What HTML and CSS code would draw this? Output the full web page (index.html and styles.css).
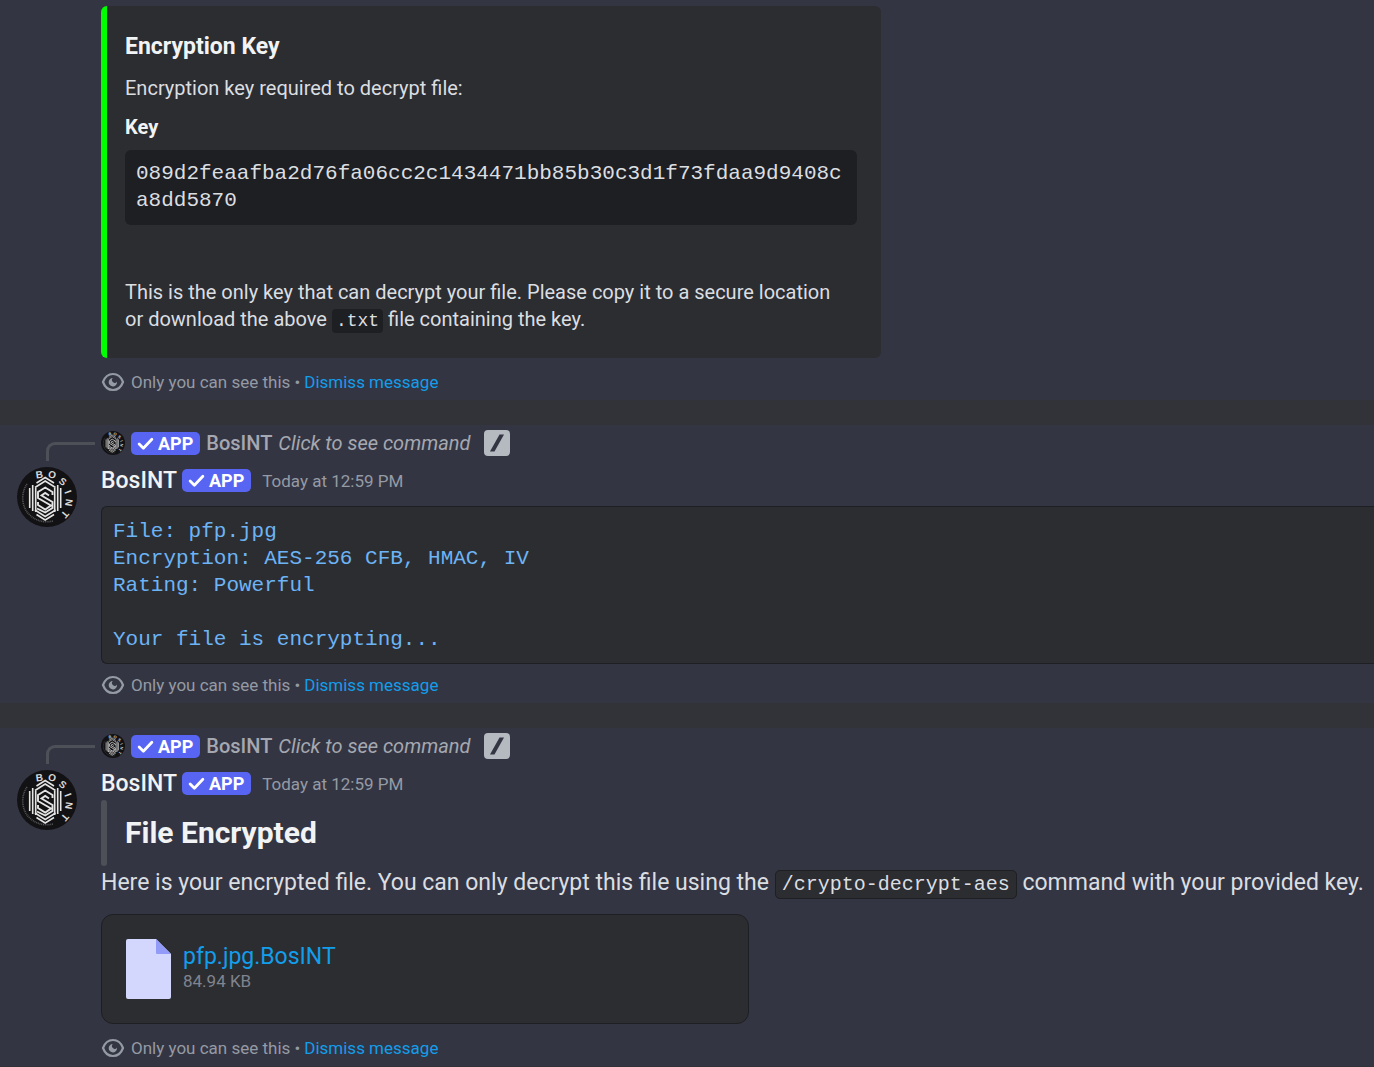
FILE: index.html
```html
<!DOCTYPE html>
<html lang="en">
<head>
<meta charset="utf-8">
<meta name="viewport" content="width=device-width, initial-scale=1">
<title>BosINT</title>
<link rel="stylesheet" href="styles.css">
</head>
<body>
<svg class="sprite" aria-hidden="true">
  <symbol id="logo" viewBox="0 0 60 60">
    <circle cx="30" cy="30" r="30" fill="#121214"/>
    <g fill="#d8d8d8" font-family="Liberation Sans, Arial, sans-serif" font-weight="700" font-size="10" text-anchor="middle">
      <text transform="translate(22.5 8) rotate(-8)" y="3">B</text>
      <text transform="translate(35 8) rotate(14)" y="3">O</text>
      <text transform="translate(45.500 15) rotate(38)" y="3">S</text>
      <text transform="translate(50.500 25) rotate(70)" y="3">I</text>
      <text transform="translate(51.500 35.500) rotate(98)" y="3">N</text>
      <text transform="translate(47.500 47) rotate(130)" y="3">T</text>
    </g>
    <path d="M10 17A25 25 0 0 0 10 45A25 25 0 0 0 36 54" fill="none" stroke="#58585b" stroke-width="1.600" stroke-dasharray="1 .8"/>
    <g fill="none" stroke="#e4e4e4" stroke-width="1.600">
      <path d="M12.700 21v20M15.700 18v26M18.700 21v24M37.700 21v24M40.700 18v26M43.700 21v20"/>
      <path d="M19.500 16l8.700-5.500 8.800 5.500M18 20.500l10.200-6.500 10.300 6.500"/>
      <path d="M19.500 47.500l8.700 5.500 8.800-5.500M18 43l10.200 6.500L38.500 43"/>
      <path d="M35.500 28v-3l-7.300-4.500L21 25v6l13 7.500-5.800 4L21 38v-3M32 28.500l-3.800-2.500-3.700 2.500 11 6.500v6l-7.300 4.500L20 41.500" stroke-width="1.900"/>
    </g>
  </symbol>
  <symbol id="check" viewBox="0 0 16 14">
    <path d="M2 7.500l4 4L14 3" fill="none" stroke="currentColor" stroke-width="2.600" stroke-linecap="round" stroke-linejoin="round"/>
  </symbol>
  <symbol id="eye" viewBox="0 0 24 20">
    <path d="M2 10C4 4.500 8 2 12 2s8 2.500 10 8c-2 5.500-6 8-10 8S4 15.500 2 10z" fill="none" stroke="currentColor" stroke-width="2.200" stroke-linejoin="round"/>
    <path d="M12 6a2.300 2.300 0 0 0 0 4 2.300 2.300 0 0 0 4-.5A4.200 4.200 0 1 1 12 6z" fill="currentColor"/>
  </symbol>
  <symbol id="slash" viewBox="0 0 26 26">
    <rect width="26" height="26" rx="4" fill="#b5bac1"/>
    <path d="M15.500 4.500H20L10.500 21.500H6z" fill="#343543"/>
  </symbol>
</svg>

<main class="chat">
  <article class="message">
    <div class="embed">
      <h2 class="embed-title">Encryption Key</h2>
      <p class="embed-text">Encryption key required to decrypt file:</p>
      <h3 class="field-name">Key</h3>
      <pre class="key">089d2feaafba2d76fa06cc2c1434471bb85b30c3d1f73fdaa9d9408ca8dd5870</pre>
      <p class="embed-note">This is the only key that can decrypt your file. Please copy it to a secure location<br>or download the above <code class="file-code">.txt</code> file containing the key.</p>
    </div>
    <footer class="notice"><svg class="eye"><use href="#eye"/></svg><span>Only you can see this •</span><a href="#">Dismiss message</a></footer>
  </article>

  <article class="message">
    <div class="reply">
      <span class="spine"></span>
      <svg class="mini-avatar"><use href="#logo"/></svg>
      <span class="badge"><svg class="check"><use href="#check"/></svg>APP</span>
      <span class="reply-name">BosINT</span>
      <em class="reply-text">Click to see command</em>
      <svg class="slash"><use href="#slash"/></svg>
    </div>
    <header class="header">
      <svg class="avatar"><use href="#logo"/></svg>
      <h2 class="name">BosINT</h2>
      <span class="badge"><svg class="check"><use href="#check"/></svg>APP</span>
      <time class="time">Today at 12:59 PM</time>
    </header>
    <pre class="output">File: pfp.jpg
Encryption: AES-256 CFB, HMAC, IV
Rating: Powerful

Your file is encrypting...</pre>
    <footer class="notice after-code"><svg class="eye"><use href="#eye"/></svg><span>Only you can see this •</span><a href="#">Dismiss message</a></footer>
  </article>

  <article class="message">
    <div class="reply">
      <span class="spine"></span>
      <svg class="mini-avatar"><use href="#logo"/></svg>
      <span class="badge"><svg class="check"><use href="#check"/></svg>APP</span>
      <span class="reply-name">BosINT</span>
      <em class="reply-text">Click to see command</em>
      <svg class="slash"><use href="#slash"/></svg>
    </div>
    <header class="header">
      <svg class="avatar"><use href="#logo"/></svg>
      <h2 class="name">BosINT</h2>
      <span class="badge"><svg class="check"><use href="#check"/></svg>APP</span>
      <time class="time">Today at 12:59 PM</time>
    </header>
    <blockquote class="quote"><h1 class="quote-title">File Encrypted</h1></blockquote>
    <p class="body-text">Here is your encrypted file. You can only decrypt this file using the <code class="command">/crypto-decrypt-aes</code> command with your provided key.</p>
    <div class="attachment">
      <svg class="file-icon" viewBox="0 0 45 60"><path d="M2 0H30L45 15V58a2 2 0 0 1-2 2H2a2 2 0 0 1-2-2V2a2 2 0 0 1 2-2z" fill="#d3d6fd"/><path d="M30 0L45 15H31a1 1 0 0 1-1-1z" fill="#939bf9"/></svg>
      <div class="file-info">
        <a class="file-name" href="#">pfp.jpg.BosINT</a>
        <span class="file-size">84.94 KB</span>
      </div>
    </div>
    <footer class="notice"><svg class="eye"><use href="#eye"/></svg><span>Only you can see this •</span><a href="#">Dismiss message</a></footer>
  </article>
</main>
</body>
</html>
```
FILE: styles.css
```css
* { box-sizing: border-box; }

body {
  margin: 0;
  background: #323338;
  color: #dbdee1;
  font-family: Roboto, "Noto Sans", sans-serif;
  overflow-x: hidden;
}

h1, h2, h3, p, pre, blockquote { margin: 0; }
a { color: #129eea; text-decoration: none; }
a:hover { text-decoration: underline; }
pre, code { font-family: "Liberation Mono", monospace; }
code { line-height: 1; }
.sprite { display: none; }

.chat { display: flex; flex-direction: column; gap: 25px; }
.message { padding: 6px 0 6px 101px; background: #343543; }

.embed {
  max-width: 780px;
  padding: 24px 24px 25px 18px;
  border-left: 6px solid #00ff00;
  border-radius: 6px;
  background: #2c2d31;
}
.embed-title { color: #f2f3f5; font-size: 23px; font-weight: 700; line-height: 33px; }
.embed-text { margin-top: 12px; font-size: 20px; line-height: 27px; }
.field-name { margin-top: 12px; color: #f2f3f5; font-size: 20px; font-weight: 700; line-height: 27px; }
.key {
  margin-top: 9px;
  padding: 10px 11px 11px;
  border-radius: 6px;
  background: #1e1f22;
  font-size: 21px;
  line-height: 27px;
  white-space: pre-wrap;
  overflow-wrap: anywhere;
}
.embed-note { margin-top: 54px; font-size: 20px; line-height: 27px; }
.file-code { padding: 2px 4px; border-radius: 4px; background: #1e1f22; font-size: 18px; }

.notice {
  display: flex;
  align-items: center;
  gap: 4px;
  margin-top: 12px;
  color: #949ba4;
  font-size: 17px;
  line-height: 24px;
}
.after-code { margin-top: 9px; }
.eye { width: 24px; height: 20px; margin-right: 2px; }

.reply { position: relative; display: flex; align-items: center; gap: 6px; height: 24px; color: #a5a8b0; font-size: 20px; }
.spine {
  position: absolute;
  left: -55px;
  top: 11px;
  width: 49px;
  height: 19px;
  border: solid #4e5058;
  border-width: 3px 0 0 3px;
  border-top-left-radius: 9px;
}
.mini-avatar { width: 24px; height: 24px; }
.reply-name { font-weight: 500; }
.slash { width: 26px; height: 26px; margin-left: 8px; }

.badge {
  display: flex;
  align-items: center;
  gap: 4px;
  height: 23px;
  padding: 0 7px 0 6px;
  border-radius: 5px;
  background: #5865f2;
  color: #fff;
  font-size: 18px;
  font-weight: 700;
  line-height: 23px;
}
.check { width: 17px; height: 15px; }

.header { position: relative; display: flex; align-items: center; gap: 5px; height: 33px; margin-top: 9px; }
.avatar { position: absolute; left: -84px; top: 3px; width: 60px; height: 60px; }
.name { color: #f2f3f5; font-size: 23px; font-weight: 500; line-height: 33px; }
.time { margin-left: 6px; color: #949ba4; font-size: 17px; }

.output {
  margin-top: 9px;
  padding: 11px 11px 10px;
  border: 1px solid #1e1f22;
  border-right: 0;
  border-radius: 6px 0 0 6px;
  background: #2c2d31;
  color: #6cb4f5;
  font-size: 21px;
  line-height: 27px;
}

.quote { display: flex; }
.quote::before { content: ""; width: 6px; border-radius: 4px; background: #4e5058; }
.quote-title { padding: 12px 18px; color: #f2f3f5; font-size: 30px; line-height: 42px; }
.body-text { font-size: 23px; line-height: 33px; white-space: nowrap; }
.command { padding: 2px 6px; border: 1px solid #1e1f22; border-radius: 5px; background: #2c2d31; font-size: 20px; }

.attachment {
  display: flex;
  align-items: center;
  gap: 12px;
  max-width: 648px;
  height: 110px;
  margin-top: 15px;
  padding: 0 24px;
  border: 1px solid #1e1f22;
  border-radius: 12px;
  background: #2c2d31;
}
.file-icon { width: 45px; height: 60px; }
.file-info { display: flex; flex-direction: column; }
.file-name { font-size: 23px; line-height: 24px; }
.file-size { color: #80848e; font-size: 17px; line-height: 24px; }
```
